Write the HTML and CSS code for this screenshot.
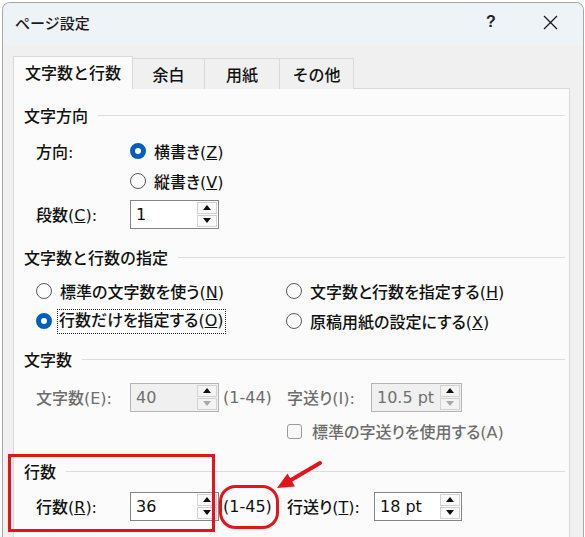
FILE: index.html
```html
<!DOCTYPE html>
<html lang="ja">
<head>
<meta charset="utf-8">
<link rel="stylesheet" href="styles.css">
</head>
<body>
<div class="window">
  <div class="titlebar">
    <span class="title">ページ設定</span>
    <span class="help">?</span>
    <span class="close"><svg width="15" height="15" viewBox="0 0 15 15"><path d="M1 1L14 14M14 1L1 14" stroke="#1a1a1a" stroke-width="1.3" fill="none"/></svg></span>
  </div>
  <div class="body">
    <div class="tabs">
      <div class="tab active">文字数と行数</div>
      <div class="tab t2">余白</div>
      <div class="tab t3">用紙</div>
      <div class="tab t4">その他</div>
    </div>
    <div class="panel">
      <div class="heading h1"><span>文字方向</span><i class="rule"></i></div>
      <div class="row r-dir1">
        <span class="lbl">方向:</span>
        <span class="radio checked"></span><span>横書き(<u>Z</u>)</span>
      </div>
      <div class="row r-dir2">
        <span class="radio"></span><span>縦書き(<u>V</u>)</span>
      </div>
      <div class="row r-cols">
        <span class="lbl">段数(<u>C</u>):</span>
        <div class="spin w89"><span class="val">1</span><span class="btns"><b class="up"></b><b class="down"></b></span></div>
      </div>

      <div class="heading h2"><span>文字数と行数の指定</span><i class="rule"></i></div>
      <div class="row r-opt1">
        <div class="col-left"><span class="radio"></span><span>標準の文字数を使う(<u>N</u>)</span></div>
        <div class="col-right"><span class="radio"></span><span>文字数と行数を指定する(<u>H</u>)</span></div>
      </div>
      <div class="row r-opt2">
        <div class="col-left"><span class="radio checked"></span><span class="focus">行数だけを指定する(<u>O</u>)</span></div>
        <div class="col-right"><span class="radio"></span><span>原稿用紙の設定にする(<u>X</u>)</span></div>
      </div>

      <div class="heading h3"><span>文字数</span><i class="rule"></i></div>
      <div class="row r-chars disabled">
        <span class="lbl">文字数(E):</span>
        <div class="spin w89 dis"><span class="val">40</span><span class="btns"><b class="up"></b><b class="down"></b></span></div>
        <span class="range">(1-44)</span>
        <span class="lbl2">字送り(I):</span>
        <div class="spin w91 dis"><span class="val">10.5 pt</span><span class="btns"><b class="up"></b><b class="down"></b></span></div>
      </div>
      <div class="row r-check disabled">
        <span class="check"></span><span>標準の字送りを使用する(A)</span>
      </div>

      <div class="heading h4"><span>行数</span><i class="rule"></i></div>
      <div class="row r-lines">
        <span class="lbl">行数(<u>R</u>):</span>
        <div class="spin w89"><span class="val">36</span><span class="btns"><b class="up"></b><b class="down"></b></span></div>
        <span class="range">(1-45)</span>
        <span class="lbl3">行送り(<u>T</u>):</span>
        <div class="spin w88"><span class="val">18 pt</span><span class="btns"><b class="up"></b><b class="down"></b></span></div>
      </div>
    </div>
  </div>
</div>
<svg class="annot" width="585" height="537" viewBox="0 0 585 537">
  <rect x="9.5" y="455.5" width="204" height="75" fill="none" stroke="#e5141b" stroke-width="3"/>
  <rect x="220.5" y="486.5" width="57" height="41" rx="15" fill="none" stroke="#e5141b" stroke-width="3"/>
  <line x1="320" y1="463" x2="291" y2="480" stroke="#e5141b" stroke-width="4" stroke-linecap="round"/>
  <polygon points="277,488 287.5,473.5 295,486.5" fill="#e5141b"/>
</svg>
</body>
</html>
```
FILE: styles.css
```css
html, body {
  margin: 0;
  padding: 0;
  background: #ffffff;
}
body {
  width: 585px;
  height: 537px;
  overflow: hidden;
  position: relative;
  font-family: "DejaVu Sans", "Noto Sans CJK JP", sans-serif;
  font-size: 16px;
  font-weight: 500;
  font-feature-settings: "palt";
  color: #111111;
}
.window {
  box-sizing: border-box;
  width: 582px;
  height: 540px;
  margin: 2px 0 0 2px;
  border: 1px solid #a8a8a8;
  border-bottom: none;
  border-radius: 8px 8px 0 0;
  background: #f0f0f0;
  overflow: hidden;
}
.titlebar {
  height: 42px;
  background: #eef3f8;
  display: flex;
  align-items: center;
  padding: 0 0 4px 12px;
  box-sizing: border-box;
}
.title {
  font-size: 15px;
  font-feature-settings: normal;
  color: #1a1a1a;
}
.help {
  margin-left: auto;
  font-family: "Liberation Sans", sans-serif;
  font-size: 16px;
  font-weight: bold;
  color: #222;
  width: 10px;
}
.close {
  display: flex;
  margin-left: 47px;
  margin-right: 25px;
}
.body {
  padding: 12px 13px 0 10px;
}
.tabs {
  display: flex;
  align-items: flex-end;
  height: 32px;
  position: relative;
  z-index: 2;
  margin-bottom: -1px;
}
.tab {
  box-sizing: border-box;
  height: 31px;
  border: 1px solid #d9d9d9;
  border-bottom: none;
  background: #f0f0f0;
  display: flex;
  align-items: center;
  justify-content: center;
  font-size: 16px;
  font-feature-settings: normal;
  margin-left: -1px;
  padding-bottom: 1px;
}
.tab.active {
  height: 33px;
  width: 120px;
  background: #fbfbfb;
  margin-left: 0;
  padding-bottom: 2px;
}
.tab.t2 { width: 73px; }
.tab.t3 { width: 76px; }
.tab.t4 { width: 75px; }
.panel {
  box-sizing: border-box;
  width: 557px;
  height: 460px;
  border: 1px solid #d9d9d9;
  background: #fbfbfb;
  padding: 14px 4px 0 10px;
}
.heading {
  display: flex;
  align-items: center;
  height: 24px;
  font-feature-settings: normal;
}
.rule {
  flex: 1;
  height: 1px;
  background: #dcdcdc;
  margin-left: 10px;
}
.row {
  display: flex;
  align-items: center;
  height: 30px;
  padding-left: 12px;
  white-space: nowrap;
}
.r-dir1 { margin-top: 9px; }
.r-dir2 { padding-left: 106px; }
.r-cols { margin-top: 3px; }
.h2 { margin-top: 16px; }
.r-opt1 { margin-top: 7px; }
.h3 { margin-top: 11px; }
.r-chars { margin-top: 11px; }
.r-check { margin-top: 4px; padding-left: 263px; }
.h4 { margin-top: 13px; }
.r-lines { margin-top: 8px; }

.lbl { width: 94px; flex: none; }
.lbl2 { width: 84px; flex: none; }
.lbl3 { width: 87px; flex: none; }
.range { width: 64px; flex: none; margin-left: 4px; }

.col-left {
  width: 250px;
  display: flex;
  align-items: center;
  flex: none;
}
.col-right {
  display: flex;
  align-items: center;
}
.radio {
  box-sizing: border-box;
  width: 16px;
  height: 16px;
  border: 1px solid #5a5a5a;
  border-radius: 50%;
  background: #fdfdfd;
  margin-right: 8px;
  flex: none;
}
.radio.checked {
  border: 5px solid #005fb8;
  background: #ffffff;
}
.focus {
  margin-left: -3px;
  padding: 0 1px 1px;
  border: 1px dotted #222;
  line-height: 22px;
}
.check {
  box-sizing: border-box;
  width: 15px;
  height: 15px;
  border: 1px solid #9a9a9a;
  border-radius: 3px;
  background: #f8f8f8;
  margin-right: 10px;
  flex: none;
}
.disabled { color: #6d6d6d; }

.spin {
  box-sizing: border-box;
  height: 29px;
  border: 1px solid #858585;
  background: #ffffff;
  display: flex;
  align-items: center;
  flex: none;
  padding: 0 1px 0 5px;
  color: #111111;
}
.spin.dis {
  background: #f0f0f0;
  border-color: #b4b4b4;
  color: #707070;
}
.w89 { width: 89px; }
.w91 { width: 91px; }
.w88 { width: 88px; }
.val { flex: 1; }
.btns {
  display: flex;
  flex-direction: column;
  gap: 1px;
  width: 20px;
}
.btns b {
  box-sizing: border-box;
  height: 12px;
  border: 1px solid #d2d2d2;
  background: #fafafa;
  display: flex;
  align-items: center;
  justify-content: center;
  position: relative;
}
.btns b::after {
  content: "";
  width: 0;
  height: 0;
  border-left: 4px solid transparent;
  border-right: 4px solid transparent;
}
.btns b.up::after { border-bottom: 5px solid #111; }
.btns b.down::after { border-top: 5px solid #111; }
.dis .btns b { background: #f3f3f3; }
.dis .btns b.down::after { border-top-color: #a8a8a8; }

.annot {
  position: absolute;
  left: 0;
  top: 0;
  pointer-events: none;
}
```
